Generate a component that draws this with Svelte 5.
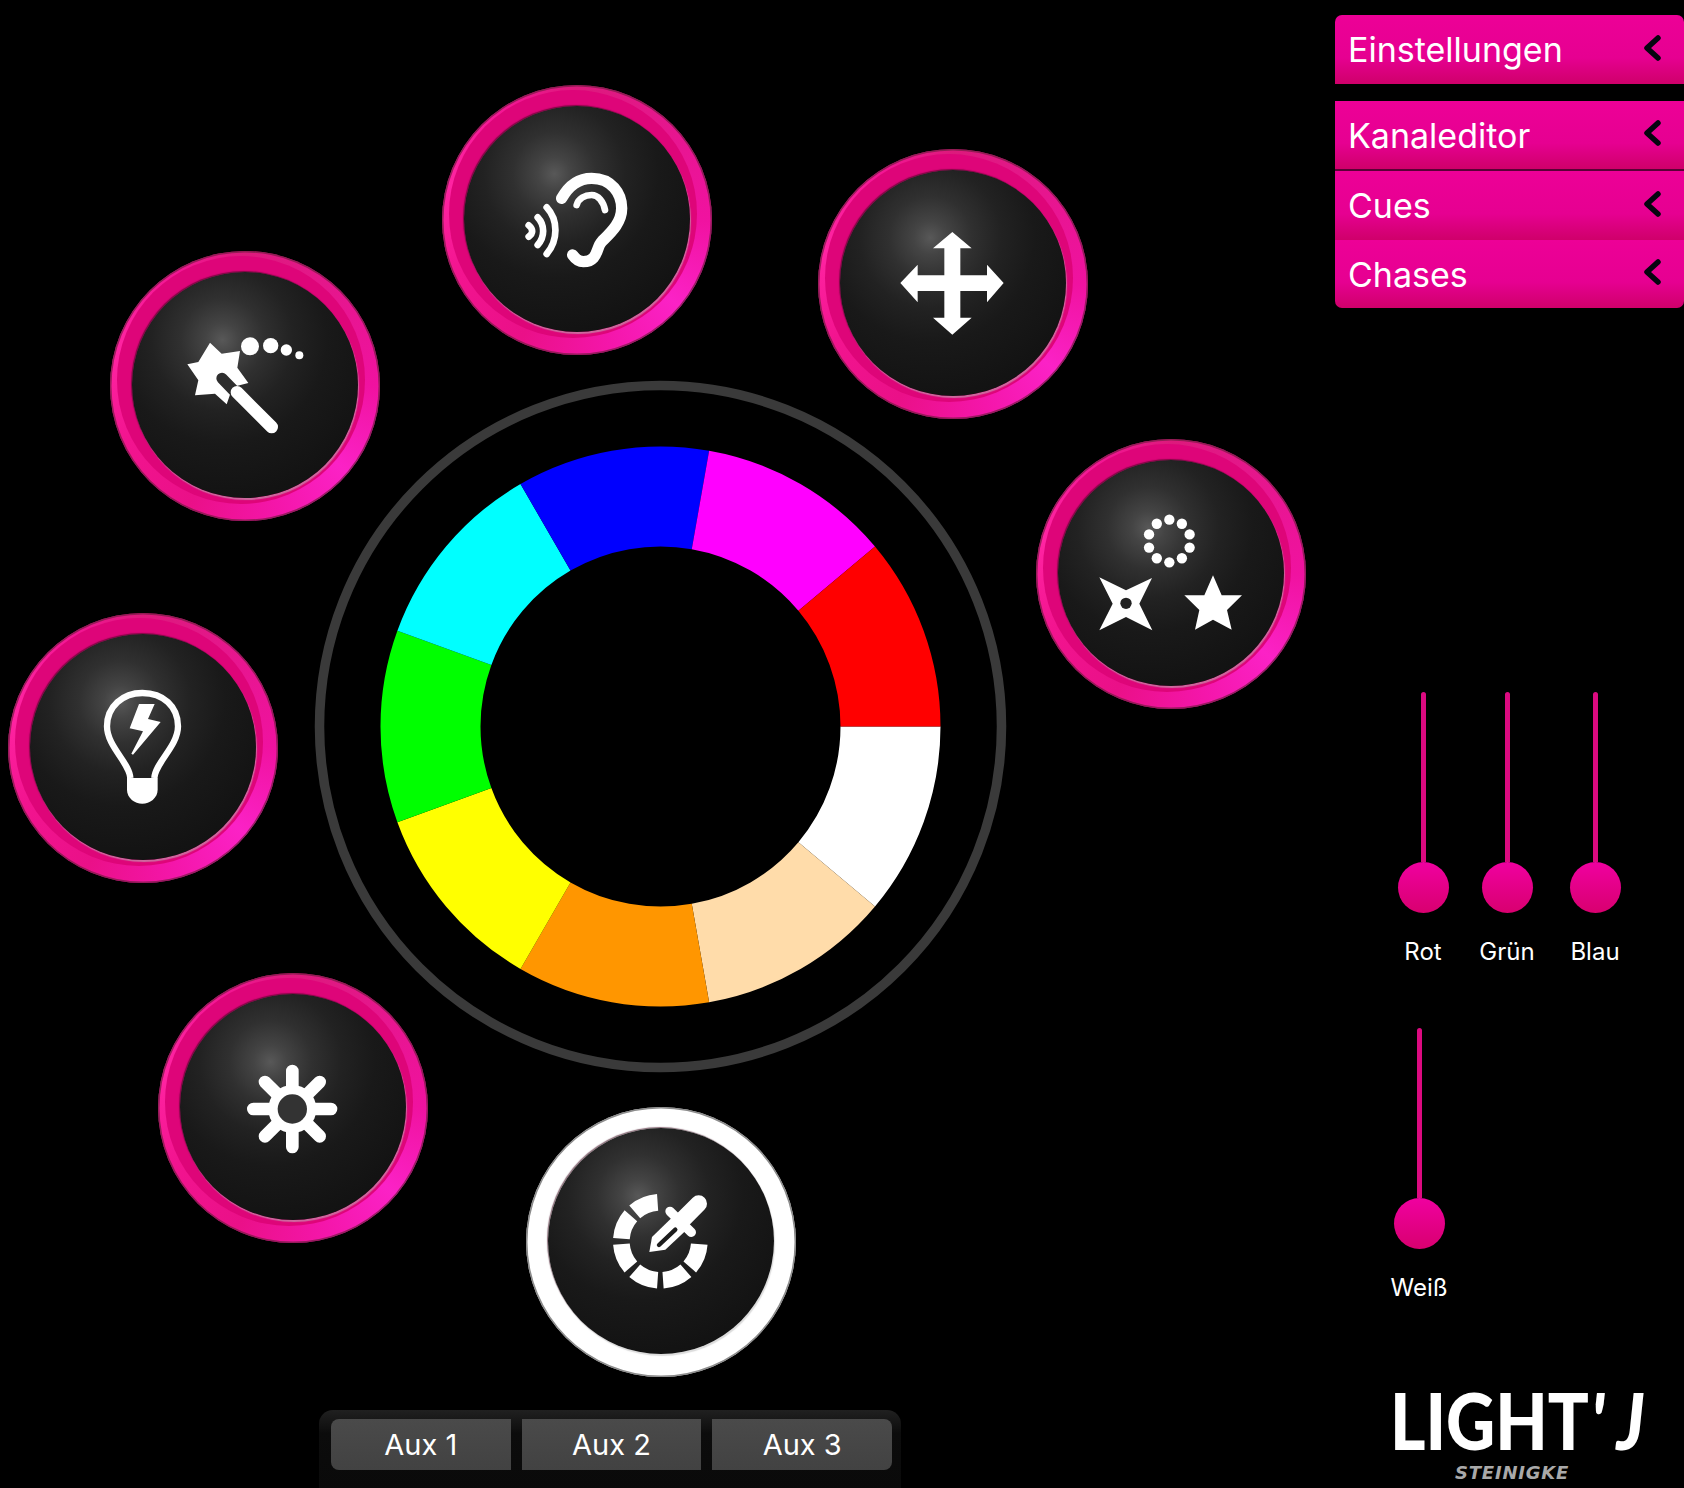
<script lang="ts">
	const CX = 660.5;
	const CY = 726.5;

	// 9 wedges of 40 degrees, clockwise from 3 o'clock
	const wheelColors = ['#ffffff', '#ffdcaa', '#ff9600', '#ffff00', '#00ff00', '#00ffff', '#0000ff', '#ff00ff', '#ff0000'];

	const polar = (cx: number, cy: number, r: number, deg: number) => {
		const a = (deg * Math.PI) / 180;
		return `${(cx + r * Math.cos(a)).toFixed(2)} ${(cy + r * Math.sin(a)).toFixed(2)}`;
	};

	const sector = (cx: number, cy: number, r0: number, r1: number, a0: number, a1: number) =>
		`M${polar(cx, cy, r0, a0)} L${polar(cx, cy, r1, a0)} A${r1} ${r1} 0 0 1 ${polar(cx, cy, r1, a1)} L${polar(cx, cy, r0, a1)} A${r0} ${r0} 0 0 0 ${polar(cx, cy, r0, a0)}Z`;

	// x/y = top-left of the 270px ring, box = viewBox origin in icon units
	const nodes = [
		{ icon: 'ear', x: 442, y: 85, box: '36 45' },
		{ icon: 'move', x: 818, y: 149, box: '25 28' },
		{ icon: 'shapes', x: 1036, y: 439, box: '17 28' },
		{ icon: 'wand', x: 110, y: 251, box: '30 32' },
		{ icon: 'bulb', x: 8, y: 613, box: '25 40' },
		{ icon: 'sun', x: 158, y: 973, box: '25 37' },
		{ icon: 'dropper', x: 526, y: 1107, box: '50 52', active: true }
	];

	const dropperArcs = [
		[4, 41], [49, 86], [94, 131], [139, 176], [184, 221], [229, 266]
	];

	const dots = Array.from({ length: 10 }, (_, i) => {
		const a = ((i * 36 - 90) * Math.PI) / 180;
		return { x: 417 + 64 * Math.cos(a), y: 334 + 64 * Math.sin(a) };
	});

	const menu = ['Einstellungen', 'Kanaleditor', 'Cues', 'Chases'];
	const rgb = ['Rot', 'Grün', 'Blau'];
	const aux = ['Aux 1', 'Aux 2', 'Aux 3'];
</script>

<main class="page">
	<section class="left">
		<div class="stage">
			<svg class="wheel" viewBox="0 0 1335 1411" aria-hidden="true">
				<circle cx={CX} cy={CY} r="341" fill="none" stroke="#3a3a3a" stroke-width="9.5" />
				{#each wheelColors as color, i}
					<path d={sector(CX, CY, 180, 280, i * 40, (i + 1) * 40)} fill={color} />
				{/each}
			</svg>

			{#each nodes as node}
				<button class="node" class:active={node.active} style="left:{node.x}px;top:{node.y}px" aria-label={node.icon}>
					<span class="knob"></span>
					<svg class="icon" viewBox="{node.box} 810 810" aria-hidden="true">
						{#if node.icon === 'ear'}
							<g fill="none" stroke="#fff" stroke-linecap="round">
								<path stroke-width="34" d="M395 385C420 340 450 325 485 325C545 325 575 370 575 415C575 460 540 490 515 515C498 532 505 575 460 575C445 575 435 565 428 555" />
								<path stroke-width="20" d="M440 405C445 385 465 375 485 375C505 375 520 395 525 420" />
								<path stroke-width="20" d="M350 412C385 450 385 510 350 552" />
								<path stroke-width="20" d="M323 442C345 465 345 500 323 525" />
								<path stroke-width="20" d="M296 466C310 478 310 490 296 500" />
							</g>
						{:else if node.icon === 'move'}
							<polygon fill="#fff" points="428,277 486,326 452,326 452,407 532,407 532,375 582,430 532,488 532,454 452,454 452,534 486,534 428,585 370,534 404,534 404,454 324,454 324,488 272,430 324,375 324,407 404,407 404,326 370,326" />
						{:else if node.icon === 'shapes'}
							{#each dots as d}
								<circle cx={d.x} cy={d.y} r="15.5" fill="#fff" />
							{/each}
							<polygon fill="#fff" points="207,443 287,482 365,445 327,522 366,602 287,562 207,602 247,522" />
							<circle cx="287" cy="521" r="17" fill="#222" />
							<polygon fill="#fff" points="548,437 574,497 635,497 590,541 604,600 548,570 494,600 507,541 462,497 522,497" />
						{:else if node.icon === 'wand'}
							<polygon fill="#fff" points="330,307 365,340 420,332 412,382 445,428 398,440 380,492 345,460 285,465 295,420 262,372 295,365" />
							<path d="M366 414L420 470" stroke="#2e2e2e" stroke-width="34" stroke-linecap="round" />
							<path d="M411 456L515 560" stroke="#fff" stroke-width="38" stroke-linecap="round" />
							<circle cx="450" cy="318" r="27" fill="#fff" />
							<circle cx="512" cy="316" r="23" fill="#fff" />
							<circle cx="559" cy="329" r="17" fill="#fff" />
							<circle cx="598" cy="345" r="12" fill="#fff" />
						{:else if node.icon === 'bulb'}
							<path fill="none" stroke="#fff" stroke-width="19" d="M392 535C390 490 322 440 322 380C322 320 370 280 428 280C490 280 535 320 535 380C535 440 466 490 464 535" />
							<path fill="#fff" d="M382 535L474 535L474 570C474 595 450 612 428 612C405 612 382 595 382 570Z" />
							<polygon fill="#fff" points="418,313 465,313 445,358 483,367 400,465 395,462 430,395 390,386" />
						{:else if node.icon === 'sun'}
							<g stroke="#fff" stroke-width="38" stroke-linecap="round">
								<path d="M428 331V559M311 445H544M346 364L510 527M510 364L346 527" />
							</g>
							<circle cx="428" cy="445" r="72" fill="#fff" />
							<circle cx="428" cy="445" r="44" fill="#333" />
						{:else if node.icon === 'dropper'}
							{#each dropperArcs as [a, b]}
								<path d={sector(453, 455, 92, 142, a, b)} fill="#fff" />
							{/each}
							<path d="M568 342L522 388" stroke="#fff" stroke-width="50" stroke-linecap="round" />
							<path d="M482 365L546 428" stroke="#fff" stroke-width="28" stroke-linecap="round" />
							<polygon fill="#fff" points="420,487 428,442 492,380 532,420 468,480" />
							<path d="M498 420L449 466" stroke="#1c1c1c" stroke-width="13" stroke-linecap="round" />
						{/if}
					</svg>
				</button>
			{/each}
		</div>

		<div class="aux">
			{#each aux as label}
				<button class="aux-btn">{label}</button>
			{/each}
		</div>
	</section>

	<aside class="right">
		<nav class="menu">
			{#each menu as item}
				<button class="menu-item">
					<span>{item}</span>
					<svg class="chev" viewBox="0 0 18 26" aria-hidden="true">
						<path d="M15 3L4 13L15 23" fill="none" stroke="#05050f" stroke-width="5.5" stroke-linecap="round" stroke-linejoin="round" />
					</svg>
				</button>
			{/each}
		</nav>

		<div class="sliders rgb">
			{#each rgb as label}
				<div class="slider">
					<span class="track"></span>
					<span class="thumb"></span>
					<span class="label">{label}</span>
				</div>
			{/each}
		</div>

		<div class="sliders white">
			<div class="slider">
				<span class="track"></span>
				<span class="thumb"></span>
				<span class="label">Weiß</span>
			</div>
		</div>

		<div class="logo">
			<div class="logo-main">LIGHT<i>'</i><i class="j">J</i></div>
			<div class="logo-sub">STEINIGKE</div>
		</div>
	</aside>
</main>

<style>
	:global(body) {
		background: #000;
		margin: 0;
	}

	.page {
		background: #000;
		color: #fff;
		display: grid;
		font-family: Inter, 'Noto Sans', sans-serif;
		grid-template-columns: 1335px 349px;
		height: 1488px;
		overflow: hidden;
		width: 1684px;
	}

	.left {
		display: flex;
		flex-direction: column;
	}

	.stage {
		height: 1410px;
		position: relative;
	}

	.wheel {
		display: block;
		height: 1411px;
		left: 0;
		position: absolute;
		top: 0;
		width: 1335px;
	}

	.node {
		background: conic-gradient(#dc1a7c 0deg, #f012a0 90deg, #fb22c6 130deg, #f416aa 165deg, #ea1088 205deg, #f2148f 245deg, #ff24a2 285deg, #f21693 330deg, #dc1a7c 360deg);
		border: 0;
		border-radius: 50%;
		box-shadow: inset 0 0 0 1.5px rgba(120, 30, 70, 0.75);
		height: 270px;
		padding: 0;
		position: absolute;
		width: 270px;
	}

	.node::before {
		background: #de0579;
		border-radius: 50%;
		content: '';
		height: 248px;
		left: 7px;
		position: absolute;
		top: 5px;
		width: 248px;
	}

	.node.active {
		background: #fff;
		box-shadow: inset 0 0 0 1.5px rgba(110, 110, 110, 0.8);
	}

	.node.active::before {
		display: none;
	}

	.knob {
		background: radial-gradient(circle at 40% 30%, #585858 0, #444 8%, #303030 20%, #222 34%, #191919 50%, #131313 75%, #0f0f0f 100%);
		border-radius: 50%;
		box-shadow: 1px 2px 1px rgba(190, 190, 190, 0.55), -1px -1px 1px rgba(60, 10, 30, 0.6);
		height: 226px;
		left: 22px;
		position: absolute;
		top: 21px;
		width: 226px;
	}

	.icon {
		height: 270px;
		left: 0;
		position: absolute;
		top: 0;
		width: 270px;
	}

	.aux {
		background: linear-gradient(#202020, #0c0c0c 30%, #0a0a0a);
		border-radius: 14px 14px 0 0;
		box-sizing: border-box;
		display: flex;
		gap: 11px;
		height: 78px;
		margin-left: 319px;
		padding: 9px 9px 0 12px;
		width: 582px;
	}

	.aux-btn {
		background: linear-gradient(#4a4a4a, #424242);
		border: 0;
		border-radius: 0;
		color: #fff;
		flex: 1;
		font-family: inherit;
		font-size: 29px;
		height: 51px;
		padding: 0;
	}

	.aux-btn:first-child {
		border-radius: 8px 0 0 8px;
	}

	.aux-btn:last-child {
		border-radius: 0 8px 8px 0;
	}

	.right {
		display: flex;
		flex-direction: column;
	}

	.menu {
		display: flex;
		flex-direction: column;
		margin-top: 15px;
	}

	.menu-item {
		align-items: center;
		background: linear-gradient(#ed0097, #e60091 62%, #cf006a);
		border: 0;
		box-sizing: border-box;
		color: #fff;
		display: flex;
		font-family: inherit;
		font-size: 34px;
		height: 69px;
		justify-content: space-between;
		padding: 0 23px 0 13px;
	}

	.menu-item:first-child {
		border-radius: 7px 7px 0 0;
		margin-bottom: 17px;
	}

	.menu-item:nth-child(2) {
		border-bottom: 2px solid #5a0036;
		height: 70px;
	}

	.menu-item:last-child {
		border-radius: 0 0 7px 7px;
		height: 68px;
	}

	.chev {
		height: 26px;
		margin-bottom: 4px;
		width: 18px;
	}

	.sliders {
		display: grid;
	}

	.rgb {
		grid-template-columns: 84px 88px 60px;
		margin-left: 58px;
		margin-top: 384px;
	}

	.white {
		grid-template-columns: 60px;
		margin-left: 54px;
		margin-top: 62px;
	}

	.slider {
		align-items: center;
		display: flex;
		flex-direction: column;
		width: 60px;
	}

	.track {
		background: #dc0a80;
		border-radius: 3px 3px 0 0;
		height: 170px;
		width: 5px;
	}

	.thumb {
		background: linear-gradient(#f000a0, #d8006f);
		border-radius: 50%;
		height: 51px;
		width: 51px;
	}

	.label {
		font-size: 24px;
		line-height: 28px;
		margin-top: 25px;
		white-space: nowrap;
	}

	.logo {
		margin-left: 55px;
		margin-top: 78px;
	}

	.logo-main {
		font-family: Lato, 'Open Sans', sans-serif;
		font-size: 79px;
		font-weight: 900;
		line-height: 80px;
		transform: scaleX(0.86);
		transform-origin: left center;
		white-space: nowrap;
	}

	.logo-main i {
		margin-left: 2px;
	}

	.logo-main .j {
		margin-left: 14px;
	}

	.logo-sub {
		color: #a9a9a9;
		font-family: 'DejaVu Sans', sans-serif;
		font-size: 18px;
		font-style: italic;
		font-weight: 700;
		letter-spacing: 0.8px;
		line-height: 18px;
		margin-left: 65px;
		margin-top: 4px;
	}
</style>
